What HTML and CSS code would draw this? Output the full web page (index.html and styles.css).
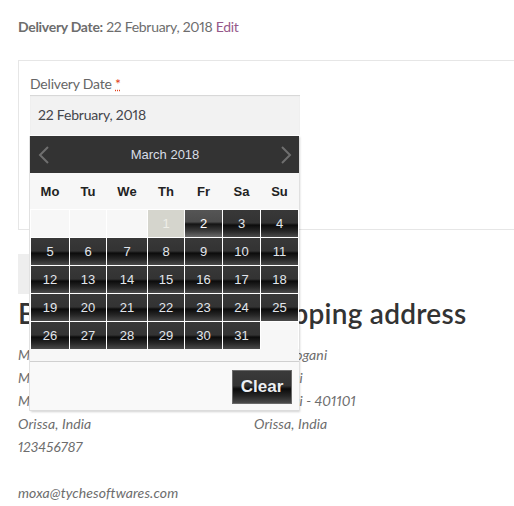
FILE: index.html
```html
<!DOCTYPE html>
<html>
<head>
<meta charset="utf-8">
<link rel="stylesheet" href="styles.css">
</head>
<body>
<div class="page">
  <p class="meta"><strong>Delivery Date:</strong> 22 February, 2018 <a class="edit" href="#">Edit</a></p>

  <div class="box">
    <label class="lbl">Delivery Date <abbr class="req" title="required">*</abbr></label>
    <div class="field">
      <div class="input">22 February, 2018</div>
      <div class="picker">
        <div class="cal-head">
          <svg class="arrow prev" width="12" height="20" viewBox="0 0 12 20"><polyline points="10,2 2,10 10,18" fill="none" stroke="#6f6f6f" stroke-width="2"/></svg>
          <span class="month">March 2018</span>
          <svg class="arrow next" width="12" height="20" viewBox="0 0 12 20"><polyline points="2,2 10,10 2,18" fill="none" stroke="#6f6f6f" stroke-width="2"/></svg>
        </div>
        <div class="dow">
          <span>Mo</span><span>Tu</span><span>We</span><span>Th</span><span>Fr</span><span>Sa</span><span>Su</span>
        </div>
        <div class="days">
          <span class="empty"></span><span class="empty"></span><span class="empty"></span>
          <span class="off">1</span><span class="hl">2</span><span class="d">3</span><span class="d">4</span>
          <span class="d">5</span><span class="d">6</span><span class="d">7</span><span class="d">8</span><span class="d">9</span><span class="d">10</span><span class="d">11</span>
          <span class="d">12</span><span class="d">13</span><span class="d">14</span><span class="d">15</span><span class="d">16</span><span class="d">17</span><span class="d">18</span>
          <span class="d">19</span><span class="d">20</span><span class="d">21</span><span class="d">22</span><span class="d">23</span><span class="d">24</span><span class="d">25</span>
          <span class="d">26</span><span class="d">27</span><span class="d">28</span><span class="d">29</span><span class="d">30</span><span class="d">31</span><span class="empty"></span>
        </div>
        <div class="cal-gap"></div>
        <div class="cal-foot">
          <button class="clear" type="button">Clear</button>
        </div>
      </div>
    </div>
  </div>

  <div class="place-btn"></div>

  <div class="addresses">
    <section class="col">
      <h2>Billing address</h2>
      <address>
        Moxa Jogani<br>
        Mumbai<br>
        Mumbai - 401101<br>
        Orissa, India<br>
        123456787<br>
        <br>
        moxa@tychesoftwares.com
      </address>
    </section>
    <section class="col">
      <h2>Shipping address</h2>
      <address>
        Moxa Jogani<br>
        Mumbai<br>
        Mumbai - 401101<br>
        Orissa, India
      </address>
    </section>
  </div>
</div>
</body>
</html>
```

FILE: styles.css
```css
* { box-sizing: border-box; }
html, body { margin: 0; padding: 0; background: #fff; }
body {
  overflow: hidden;
  font-family: "Lato", "Noto Sans", sans-serif;
  font-size: 14px;
  font-variant-numeric: proportional-nums;
  color: #6d6d6d;
}
.page {
  padding: 16px 0 0 18px;
  width: 560px;
}
.meta {
  margin: 0;
  line-height: 22px;
  letter-spacing: -0.3px;
}
.meta strong { font-weight: 700; }
.edit { color: #96588a; text-decoration: none; }

.box {
  margin-top: 22px;
  height: 170px;
  border: 1px solid #e6e6e6;
  padding: 11px 0 0 11px;
}
.lbl {
  display: block;
  line-height: 23px;
  color: #666;
  letter-spacing: -0.2px;
}
.req {
  color: #e2401c;
  text-decoration: underline dotted;
  border: 0;
}
.field {
  position: relative;
  width: 270px;
}
.input {
  height: 40px;
  background: #f2f2f2;
  box-shadow: inset 0 1px 1px rgba(0,0,0,0.12);
  padding: 0 8px;
  line-height: 40px;
  color: #43454b;
  letter-spacing: -0.2px;
}
.picker {
  position: absolute;
  left: 0;
  top: 41px;
  width: 269px;
  background: #f7f7f7;
  box-shadow: 1px 1px 2px rgba(0,0,0,0.18), -1px 0 0 #e4e4e4;
  z-index: 5;
  font-family: "Liberation Sans", Arial, sans-serif;
  font-size: 13px;
  font-variant-numeric: normal;
}
.cal-head {
  height: 37px;
  background: #333;
  display: flex;
  align-items: center;
  justify-content: space-between;
  padding: 0 7px 0 8px;
}
.month { color: #d8dde6; }
.dow {
  height: 36px;
  display: grid;
  grid-template-columns: 38px 36px 40px 36px 37px 37px 37px;
  column-gap: 1px;
  padding-left: 1px;
  align-items: center;
  font-weight: 700;
  color: #222;
  text-align: center;
}
.days {
  display: grid;
  grid-template-columns: 38px 36px 40px 36px 37px 37px 37px;
  grid-auto-rows: 27px;
  gap: 1px;
  padding: 1px 0 0 1px;
  background: #fff;
}
.days span {
  display: flex;
  align-items: center;
  justify-content: center;
  color: #e2e6ec;
}
.days .empty { background: #f7f7f7; }
.days .d {
  background: linear-gradient(to bottom, #383838 0%, #333 48%, #0b0b0b 56%, #262626 78%, #4a4a4a 100%);
}
.days .hl {
  background: linear-gradient(to bottom, #555 0%, #4c4c4c 44%, #141414 52%, #3c3c3c 78%, #6a6a6a 100%);
  color: #fff;
}
.days .off {
  background: #d5d5cd;
  color: #eeeee8;
}
.cal-gap {
  height: 12px;
  background: #f7f7f7;
}
.cal-foot {
  border-top: 1px solid #d0d0d0;
  border-bottom: 1px solid #dcdcdc;
  height: 50px;
  display: flex;
  justify-content: flex-end;
  align-items: flex-start;
  padding: 8px 7px 0 0;
  background: #f9f9f9;
}
.clear {
  width: 60px;
  height: 34px;
  border: 1px solid #6a6a6a;
  background: linear-gradient(to bottom, #3a3a3a 0%, #333 46%, #0b0b0b 56%, #262626 78%, #4a4a4a 100%);
  color: #eceff3;
  font-family: "Liberation Sans", Arial, sans-serif;
  font-size: 17px;
  font-weight: 700;
  padding: 0;
}

.place-btn {
  margin-top: 24px;
  width: 160px;
  height: 40px;
  background: #eeeeee;
}

.addresses {
  display: grid;
  grid-template-columns: 236px 236px;
}
.col h2 {
  margin: -1px 0 0;
  font-size: 28px;
  font-weight: 600;
  line-height: 40px;
  color: #333;
  letter-spacing: 0.25px;
}
.col address {
  margin: 10px 0 0;
  font-style: italic;
  line-height: 23px;
  color: #6d6d6d;
  letter-spacing: 0.1px;
}
```
